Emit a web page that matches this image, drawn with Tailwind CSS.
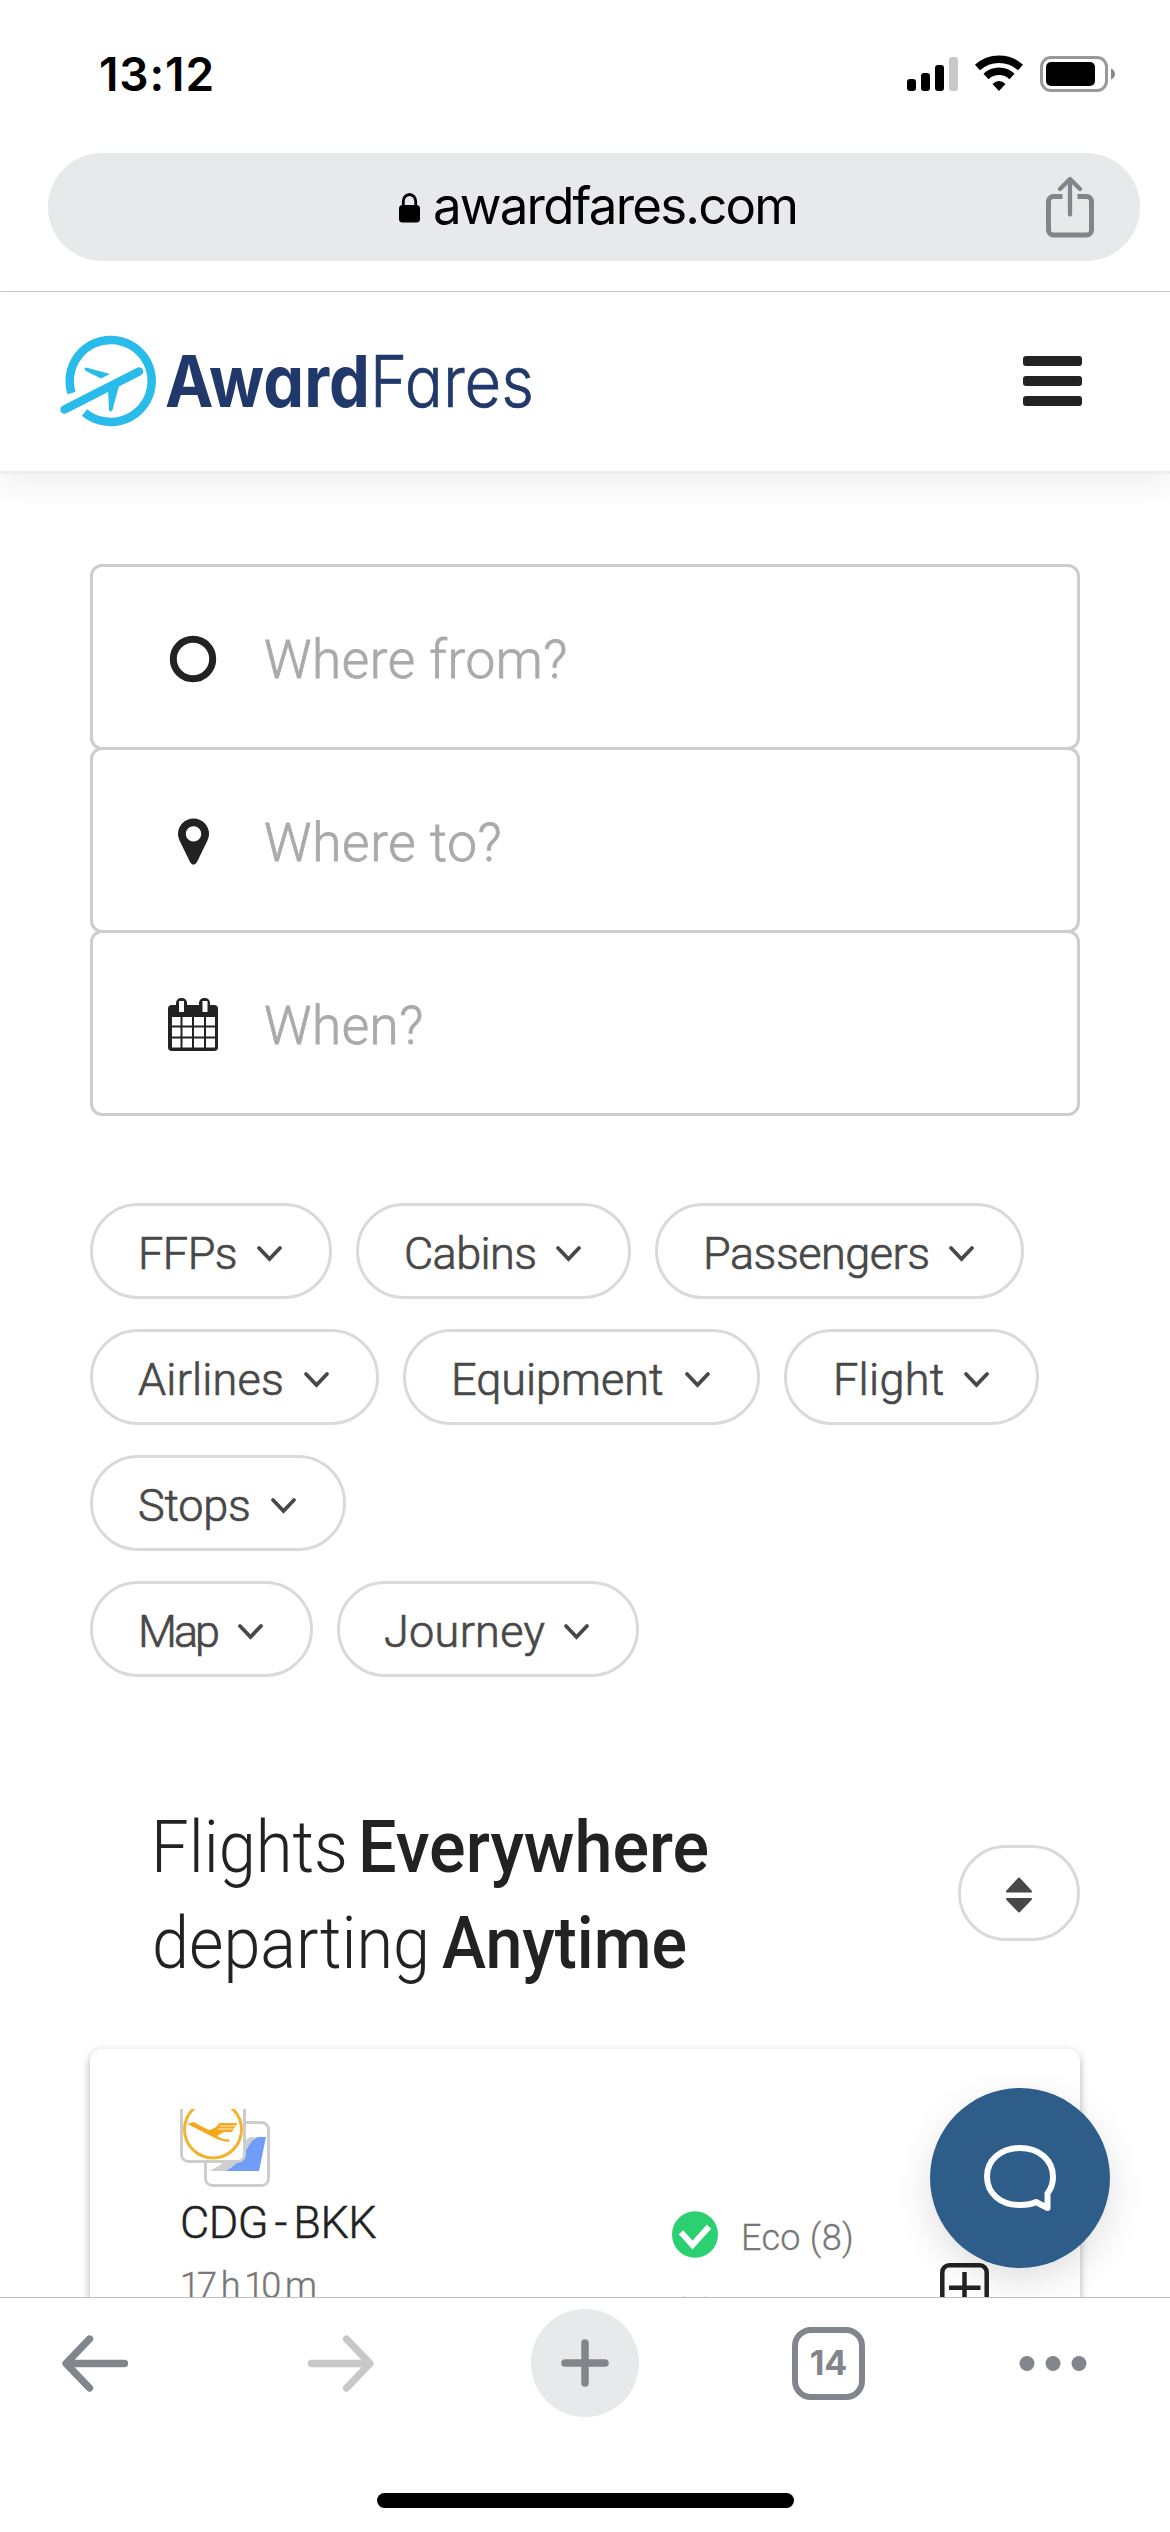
<!DOCTYPE html>
<html lang="en">
<head>
<meta charset="utf-8">
<title>AwardFares</title>
<script src="https://cdn.jsdelivr.net/npm/@tailwindcss/browser@4"></script>
</head>
<body class="bg-white">
<div class="w-[1170px] h-[2532px] overflow-hidden flex flex-col bg-white font-['Roboto',sans-serif] whitespace-nowrap">

  <!-- Status bar -->
  <div class="h-[153px] shrink-0 flex items-start justify-between pl-[99px] pr-[54px] pt-[46px] text-black">
    <div class="font-['Inter',sans-serif] font-semibold text-[46px] leading-[56px] tracking-[0.9px]">13:12</div>
    <svg class="mt-[6px]" width="209" height="42" viewBox="907 52 209 42">
      <rect x="907" y="79" width="9" height="12" rx="3"/><rect x="921" y="73" width="9" height="18" rx="3"/><rect x="935" y="65" width="9" height="26" rx="3"/><rect x="949" y="57" width="9" height="34" rx="3" fill="#c8c8c8"/>
      <path d="M977.5 67.5a32 32 0 0 1 43 0" fill="none" stroke="#000" stroke-width="7.5"/>
      <path d="M986 76.500a19 19 0 0 1 26 0" fill="none" stroke="#000" stroke-width="7.500"/>
      <path d="M999 91l-6.500-7q6.500-6 13 0z"/>
      <rect x="1041.500" y="57.500" width="65" height="33" rx="9.500" fill="none" stroke="#999" stroke-width="3"/>
      <rect x="1046" y="62" width="49" height="24" rx="5"/>
      <path d="M1111 68.500q4 2 4 5.500t-4 5.500z" fill="#888"/>
    </svg>
  </div>

  <!-- Address bar -->
  <div class="h-[139px] shrink-0 border-b border-[#c6c8ca] pl-[48px] pr-[30px]">
    <div class="h-[108px] rounded-full bg-[#e7e9eb] flex items-center pl-[351px] pr-[46px]">
      <svg width="21" height="30" viewBox="0 0 21 30" class="mt-[2px]"><rect y="12" width="21" height="17.500" rx="3.500"/><path d="M4.300 13V8.500a6.200 7 0 0 1 12.400 0V13" fill="none" stroke="#000" stroke-width="2.800"/></svg>
      <div class="ml-[13px] mt-[-3px] font-['Inter',sans-serif] text-[51px] leading-[60px] tracking-[-1.8px] text-black">awardfares.com</div>
      <svg class="ml-auto" width="48" height="62" viewBox="0 0 48 62" fill="none" stroke="#80868b" stroke-width="5"><path d="M16.500 20.500H7.500a5 5 0 0 0-5 5V54a5 5 0 0 0 5 5h33a5 5 0 0 0 5-5V25.500a5 5 0 0 0-5-5h-9"/><path d="M24 38.500V4M14 13L24 3L34 13" stroke-width="4.300" stroke-linecap="round" stroke-linejoin="round"/></svg>
    </div>
  </div>

  <!-- Site header -->
  <header class="h-[182px] shrink-0 border-b-3 border-[#eeeeee] shadow-[0_16px_24px_rgba(0,0,0,0.05)] flex items-center justify-between pl-[58px] pr-[88px] pb-[2px]">
    <svg width="480" height="100" viewBox="58 331 480 100">
      <path d="M71.500 393A41 41 0 1 1 84.500 412.500" fill="none" stroke="#29bbea" stroke-width="8.500"/>
      <path d="M64.500 409.500L139 371.500" stroke="#29bbea" stroke-width="8.500" stroke-linecap="round"/>
      <path d="M86 367.500q-3 1 0 3.500l15 7.500 9-4.500zM108 388l14-9q-2.500 4-4 10.500L112.500 410q-2.500 3-3.500 0z" fill="#29bbea"/>
      <text x="165" y="407" font-family="Inter" font-weight="700" font-size="71.500" textLength="205" lengthAdjust="spacingAndGlyphs" fill="#20386a" class="[font-feature-settings:'cv11'_1,'ss03'_1]">Award</text>
      <text x="370" y="407" font-family="Inter" font-weight="300" font-size="71.500" textLength="164" lengthAdjust="spacingAndGlyphs" fill="#20386a" stroke="#20386a" stroke-width=".7" class="[font-feature-settings:'cv11'_1,'ss03'_1]">Fares</text>
    </svg>
    <div class="flex flex-col gap-[10px]">
      <div class="w-[59px] h-[10px] rounded-[3px] bg-[#222]"></div><div class="w-[59px] h-[10px] rounded-[3px] bg-[#222]"></div><div class="w-[59px] h-[10px] rounded-[3px] bg-[#222]"></div>
    </div>
  </header>

  <main class="h-[1823px] shrink-0 overflow-hidden px-[90px] pt-[90px] relative flex flex-col">
    <!-- Search fields -->
    <div class="flex flex-col text-[#aaaaaa] text-[53px] leading-[60px] font-light [-webkit-text-stroke:0.8px_#aaaaaa]">
      <div class="h-[186px] border-3 border-[#cdcdcd] rounded-[12px] flex items-center pl-[75px]">
        <svg width="50" height="56" viewBox="168 629 50 56" fill="none" stroke="#222" stroke-width="7"><circle cx="193" cy="659" r="19.700"/></svg>
        <span class="ml-[46px] mt-[5px] tracking-[0.6px]">Where from?</span>
      </div>
      <div class="h-[186px] -mt-[3px] border-3 border-[#cdcdcd] rounded-[12px] flex items-center pl-[75px]">
        <svg width="50" height="56" viewBox="168 812 50 56"><path fill="#222" fill-rule="evenodd" d="M193.500 818.500a15.500 15.500 0 0 1 15.500 15.500q0 4-3 9.500L197 862q-3.500 5.500-7 0l-9-18.500q-3-5.500-3-9.500a15.500 15.500 0 0 1 15.500-15.500zm0 7.700a7.700 7.700 0 1 0 .01 0z"/></svg>
        <span class="ml-[46px] mt-[5px] tracking-[0.7px]">Where to?</span>
      </div>
      <div class="h-[186px] -mt-[3px] border-3 border-[#cdcdcd] rounded-[12px] flex items-center pl-[75px]">
        <svg width="50" height="56" viewBox="168 995 50 56"><rect x="168" y="1005" width="50" height="46" rx="4" fill="#222"/><rect x="176" y="998" width="11" height="16" rx="5" fill="#222"/><rect x="199" y="998" width="11" height="16" rx="5" fill="#222"/><path fill="#fff" d="M179 1001h5v11h-5zM202.500 1001h5v11h-5zM172 1017h8.500v8.500H172zM182.500 1017h9.500v8.500h-9.500zM194 1017h10v8.500h-10zM206 1017h9v8.500h-9zM172 1027.500h8.500v9H172zM182.500 1027.500h9.500v9h-9.500zM194 1027.500h10v9h-10zM206 1027.500h9v9h-9zM172 1038.500h8.500v9H172zM182.500 1038.500h9.500v9h-9.500zM194 1038.500h10v9h-10zM206 1038.500h9v9h-9z"/></svg>
        <span class="ml-[46px] mt-[5px] tracking-[0.5px]">When?</span>
      </div>
    </div>

    <!-- Filter chips -->
    <div class="mt-[87px] flex flex-col gap-[30px] text-[#484848] text-[45px] leading-[52px] font-light [-webkit-text-stroke:0.7px_#484848]">
      <div class="flex gap-6">
        <button class="w-[242px] h-24 border-3 border-[#dadadc] rounded-full flex items-center justify-between pl-[45px] pr-[46px]"><span class="mt-[5px] tracking-[-0.5px]">FFPs</span><svg width="27" height="18" viewBox="0 0 27 18" class="mt-[6px]" fill="none" stroke="#484848" stroke-width="3.800" stroke-linecap="round"><path d="M3 3l10.500 11L24 3"/></svg></button>
        <button class="w-[275px] h-24 border-3 border-[#dadadc] rounded-full flex items-center justify-between pl-[45px] pr-[46px]"><span class="mt-[5px] tracking-[-0.6px]">Cabins</span><svg width="27" height="18" viewBox="0 0 27 18" class="mt-[6px]" fill="none" stroke="#484848" stroke-width="3.800" stroke-linecap="round"><path d="M3 3l10.500 11L24 3"/></svg></button>
        <button class="w-[369px] h-24 border-3 border-[#dadadc] rounded-full flex items-center justify-between pl-[45px] pr-[46px]"><span class="mt-[5px] tracking-[-0.5px]">Passengers</span><svg width="27" height="18" viewBox="0 0 27 18" class="mt-[6px]" fill="none" stroke="#484848" stroke-width="3.800" stroke-linecap="round"><path d="M3 3l10.500 11L24 3"/></svg></button>
      </div>
      <div class="flex gap-6">
        <button class="w-[289px] h-24 border-3 border-[#dadadc] rounded-full flex items-center justify-between pl-[45px] pr-[46px]"><span class="mt-[5px] tracking-[0.2px]">Airlines</span><svg width="27" height="18" viewBox="0 0 27 18" class="mt-[6px]" fill="none" stroke="#484848" stroke-width="3.800" stroke-linecap="round"><path d="M3 3l10.500 11L24 3"/></svg></button>
        <button class="w-[357px] h-24 border-3 border-[#dadadc] rounded-full flex items-center justify-between pl-[45px] pr-[46px]"><span class="mt-[5px] tracking-[0px]">Equipment</span><svg width="27" height="18" viewBox="0 0 27 18" class="mt-[6px]" fill="none" stroke="#484848" stroke-width="3.800" stroke-linecap="round"><path d="M3 3l10.500 11L24 3"/></svg></button>
        <button class="w-[255px] h-24 border-3 border-[#dadadc] rounded-full flex items-center justify-between pl-[46px] pr-[46px]"><span class="mt-[5px] tracking-[0.3px]">Flight</span><svg width="27" height="18" viewBox="0 0 27 18" class="mt-[6px]" fill="none" stroke="#484848" stroke-width="3.800" stroke-linecap="round"><path d="M3 3l10.500 11L24 3"/></svg></button>
      </div>
      <div class="flex gap-6">
        <button class="w-[256px] h-24 border-3 border-[#dadadc] rounded-full flex items-center justify-between pl-[45px] pr-[46px]"><span class="mt-[5px] tracking-[-0.2px]">Stops</span><svg width="27" height="18" viewBox="0 0 27 18" class="mt-[6px]" fill="none" stroke="#484848" stroke-width="3.800" stroke-linecap="round"><path d="M3 3l10.500 11L24 3"/></svg></button>
      </div>
      <div class="flex gap-6">
        <button class="w-[223px] h-24 border-3 border-[#dadadc] rounded-full flex items-center justify-between pl-[45px] pr-[46px]"><span class="mt-[5px] tracking-[-3px]">Map</span><svg width="27" height="18" viewBox="0 0 27 18" class="mt-[6px]" fill="none" stroke="#484848" stroke-width="3.800" stroke-linecap="round"><path d="M3 3l10.500 11L24 3"/></svg></button>
        <button class="w-[302px] h-24 border-3 border-[#dadadc] rounded-full flex items-center justify-between pl-[44px] pr-[46px]"><span class="mt-[5px] tracking-[0.3px]">Journey</span><svg width="27" height="18" viewBox="0 0 27 18" class="mt-[6px]" fill="none" stroke="#484848" stroke-width="3.800" stroke-linecap="round"><path d="M3 3l10.500 11L24 3"/></svg></button>
      </div>
    </div>

    <!-- Results heading -->
    <div class="mt-[119px] h-48 flex justify-between pl-[62px]">
      <svg width="570" height="192" viewBox="152 1796 570 192" font-family="Roboto" font-size="72" fill="#222">
        <text x="151" y="1872" font-weight="300" textLength="197" lengthAdjust="spacingAndGlyphs">Flights</text>
        <text x="358" y="1872" font-weight="500" textLength="351" lengthAdjust="spacingAndGlyphs">Everywhere</text>
        <text x="152" y="1968" font-weight="300" textLength="278" lengthAdjust="spacingAndGlyphs">departing</text>
        <text x="442" y="1968" font-weight="500" textLength="245" lengthAdjust="spacingAndGlyphs">Anytime</text>
      </svg>
      <button class="mt-[49px] w-[122px] h-24 border-3 border-[#dadadc] rounded-full flex items-center justify-center">
        <svg class="mt-[4px]" width="26" height="36" viewBox="0 0 26 36" fill="#484848" stroke="#484848" stroke-width="2" stroke-linejoin="round"><path d="M13 1.500L25 14.500H1zM1 22h24L13 34.500z"/></svg>
      </button>
    </div>

    <!-- Flight card -->
    <div class="mt-[61px] h-[320px] shrink-0 rounded-[12px] bg-white shadow-[0_3px_9px_rgba(0,0,0,0.3)] flex pl-[90px] pt-[60px]">
      <div class="w-[492px] flex flex-col">
        <svg width="92" height="80" viewBox="180 2109 92 80">
          <rect x="205.500" y="2122.500" width="63" height="63" rx="7" fill="#fff" stroke="#cdcdcd" stroke-width="3"/>
          <path d="M209 2171q10-4 18-12 12-14 23-22h5l-20 34z" fill="#cfcfcf"/>
          <path d="M226 2171q11-6 17-16l7-11q4-7 9-7h7l-7 34z" fill="#709df8"/>
          <rect x="181.500" y="2090" width="63" height="71.500" rx="7" fill="#fff" stroke="#cdcdcd" stroke-width="3"/>
          <circle cx="213" cy="2129.500" r="28.500" fill="none" stroke="#f3b32d" stroke-width="3"/>
          <path d="M187.500 2124l6-2 15 8q7-1 11-7h18l-2 3-1.500 3-2 3h-8l-7 4q6 4 12.500 3.500L229 2142q-10-1-18-6z" fill="#f5a81c"/>
          <path d="M220 2126h16M218 2129h17" stroke="#fff" stroke-width=".8"/>
        </svg>
        <div class="mt-[8px] text-[#222] text-[45px] leading-[52px] font-light [-webkit-text-stroke:0.5px_#222222] tracking-[-0.5px] [word-spacing:-4px]">CDG - BKK</div>
        <div class="mt-[16px] text-[#777] text-[36px] leading-[42px] font-light [-webkit-text-stroke:0.4px_#777777] tracking-[-3px] [word-spacing:1px]">17 h 10 m</div>
      </div>
      <div class="flex flex-col gap-[26px] pt-[98px] text-[#777] text-[36px] leading-[47px] font-light [-webkit-text-stroke:0.3px_#777777]">
        <div class="flex items-center">
          <svg width="46" height="47" viewBox="0 0 46 47"><ellipse cx="23" cy="23.500" rx="23" ry="23.300" fill="#2bd070"/><path d="M11 23.500l9.500 10.500L35 18" fill="none" stroke="#fff" stroke-width="6" stroke-linecap="square"/></svg>
          <span class="ml-[23px] mt-[8px] tracking-[0.3px]">Eco (8)</span>
        </div>
        <div class="flex items-center">
          <svg width="46" height="47" viewBox="0 0 46 47" fill="#dbeafa"><path d="M5 14q0-6 4-8.500 3-3 6 0l5 5.500 3 3 3-3 5-5.500q3-3 6 0 4 2.500 4 8.500L23 36z"/></svg>
          <span class="ml-[23px] mt-[8px] tracking-[0.3px]">Prem</span>
        </div>
      </div>
      <svg class="absolute left-[940px] top-[1789px]" width="49" height="49" viewBox="0 0 49 49" fill="none" stroke="#222"><rect x="2.300" y="2.300" width="44.400" height="44.400" rx="7" stroke-width="4.500"/><path d="M9 24.700h31.500M24.500 9v31.500" stroke-width="4.500"/></svg>
    </div>

    <!-- Chat launcher -->
    <div class="absolute left-[930px] top-[1614px] size-[180px] rounded-full bg-[#2f5d8a] shadow-[0_12px_36px_rgba(0,0,0,0.13)] flex items-center justify-center">
      <svg width="76" height="72" viewBox="982 2142 76 72" fill="none" stroke="#fff" stroke-width="6" stroke-linejoin="round"><path d="M1036 2202q-6 3-16 3c-20 0-33-12-33-28.500S1001 2148 1020 2148s33 12 33 29q0 9-5.500 16.500V2208z"/></svg>
    </div>
  </main>

  <!-- Browser toolbar -->
  <nav class="h-[235px] shrink-0 border-t border-[#bfbfbf] bg-white relative flex flex-col items-center">
    <div class="mt-[11px] w-full h-[108px] flex items-center justify-between pl-[61px] pr-[82px]">
      <svg width="68" height="58" viewBox="0 0 68 58" fill="none" stroke="#80868b" stroke-width="7.300" stroke-linecap="round" stroke-linejoin="round"><path d="M63.500 29.500H6M28.500 5L5 29.500L28.500 54"/></svg>
      <svg class="ml-[109px]" width="68" height="58" viewBox="0 0 68 58" fill="none" stroke="#c8c8c8" stroke-width="7.300" stroke-linecap="round" stroke-linejoin="round"><path d="M4.500 29.500H62M39.500 5L63 29.500L39.500 54"/></svg>
      <div class="ml-[87px] size-[108px] rounded-full bg-[#e8e9eb] flex items-center justify-center"><svg width="48" height="48" viewBox="0 0 48 48" stroke="#80868b" stroke-width="7.500" stroke-linecap="round"><path d="M4 24h40M24 4v40"/></svg></div>
      <div class="ml-[84px] w-[73px] h-[73px] border-[6.500px] border-[#80868b] rounded-[19px] flex items-center justify-center text-[#80868b] font-['Inter',sans-serif] font-bold text-[34px] leading-none">14</div>
      <svg class="ml-[84px]" width="70" height="16" viewBox="0 0 70 16" fill="#80868b"><circle cx="9" cy="8.500" r="7.500"/><circle cx="35" cy="8.500" r="7.500"/><circle cx="61" cy="8.500" r="7.500"/></svg>
    </div>
    <div class="mt-[76px] w-[417px] h-[15px] rounded-full bg-black"></div>
  </nav>
</div>
</body>
</html>
